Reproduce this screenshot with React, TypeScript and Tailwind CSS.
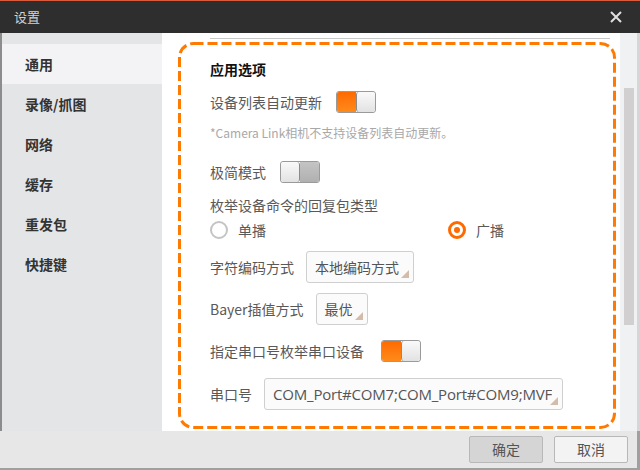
import React from 'react';

const FONT = { fontFamily: '"Noto Sans CJK SC", "Noto Sans", sans-serif' };

function Toggle({ on }: { on: boolean }) {
  return (
    <div className="flex h-[22px] w-[40px] rounded-[3px] overflow-hidden border border-[#9a9a9a] shrink-0">
      {on ? (
        <>
          <div className="flex-1 bg-gradient-to-b from-[#ff6a00] to-[#ff8a1a]" />
          <div className="w-[19px] rounded-[3px] border-l border-[#8a8a8a] bg-gradient-to-b from-[#fafafa] to-[#e2e2e2]" />
        </>
      ) : (
        <>
          <div className="w-[19px] rounded-[3px] border-r border-[#8a8a8a] bg-gradient-to-b from-[#fafafa] to-[#e2e2e2]" />
          <div className="flex-1 bg-gradient-to-b from-[#c4c4c4] to-[#b0b0b0]" />
        </>
      )}
    </div>
  );
}

function Select({ label, w }: { label: string; w: string }) {
  return (
    <div className={`relative flex h-[32px] items-center rounded-[3px] border border-[#cfcfcf] bg-[#fbfbfb] pl-[8px] text-[14px] text-[#555] ${w}`}>
      {label}
      <svg className="absolute bottom-[4px] right-[4px]" width="8" height="8" viewBox="0 0 8 8">
        <path d="M8 0 L8 8 L0 8 Z" fill="#d4bcaa" />
      </svg>
    </div>
  );
}

const sideItems = ['通用', '录像/抓图', '网络', '缓存', '重发包', '快捷键'];

export default function App() {
  return (
    <div className="flex h-[470px] w-[640px] flex-col overflow-hidden bg-white" style={FONT}>
      {/* title bar */}
      <div className="flex h-[33px] shrink-0 flex-col bg-[#2e2e2e]">
        <div className="h-px bg-[#d95a3c]" />
        <div className="flex flex-1 items-center justify-between pl-[14px] pr-[18px]">
          <span className="text-[13px] text-[#d2d2d2]">设置</span>
          <svg width="12" height="12" viewBox="0 0 12 12">
            <path d="M1 1 L11 11 M11 1 L1 11" stroke="#e0e0e0" strokeWidth="2" />
          </svg>
        </div>
      </div>

      <div className="flex min-h-0 flex-1">
        {/* sidebar */}
        <div className="flex w-[162px] shrink-0 flex-col border-l-2 border-[#8c8c8c] bg-[#e4e5e7] pt-[11px]">
          {sideItems.map((s, i) => (
            <div
              key={s}
              className={`flex h-[40px] items-center pl-[23px] text-[14px] font-bold text-[#333] ${i === 0 ? 'bg-[#f3f3f5]' : ''}`}
            >
              {s}
            </div>
          ))}
        </div>

        {/* content */}
        <div className="relative flex flex-1 flex-col pl-[48px] text-[14px] text-[#595959]">
          <div className="mt-[5px] h-px w-[400px] bg-[#c8c8c8]" />
          <div className="mt-[18px] flex h-[24px] items-center font-bold text-[#111]">应用选项</div>
          <div className="mt-[9px] flex h-[24px] items-center gap-[14px]">
            <span>设备列表自动更新</span>
            <Toggle on />
          </div>
          <div className="mt-[10px] flex h-[18px] items-center text-[12px] text-[#a8a8a8]">
            *Camera Link相机不支持设备列表自动更新。
          </div>
          <div className="mt-[18px] flex h-[24px] items-center gap-[14px]">
            <span>极简模式</span>
            <Toggle on={false} />
          </div>
          <div className="mt-[11px] flex h-[20px] items-center">枚举设备命令的回复包类型</div>
          <div className="mt-[5px] flex h-[20px] items-center">
            <div className="flex w-[238px] items-center gap-[10px]">
              <div className="h-[18px] w-[18px] rounded-full border-2 border-[#c4c4c4]" />
              <span>单播</span>
            </div>
            <div className="flex items-center gap-[10px]">
              <div className="flex h-[18px] w-[18px] items-center justify-center rounded-full border-[3px] border-[#ff6a00]">
                <div className="h-[6px] w-[6px] rounded-full bg-[#ff6a00]" />
              </div>
              <span>广播</span>
            </div>
          </div>
          <div className="mt-[11px] flex h-[32px] items-center gap-[12px]">
            <span>字符编码方式</span>
            <Select label="本地编码方式" w="w-[108px]" />
          </div>
          <div className="mt-[10px] flex h-[32px] items-center gap-[12px]">
            <span>Bayer插值方式</span>
            <Select label="最优" w="w-[52px]" />
          </div>
          <div className="mt-[14px] flex h-[24px] items-center gap-[17px]">
            <span>指定串口号枚举串口设备</span>
            <Toggle on />
          </div>
          <div className="mt-[15px] flex h-[32px] items-center gap-[12px]">
            <span>串口号</span>
            <div className="relative flex h-[32px] w-[299px] items-center overflow-hidden whitespace-nowrap rounded-[3px] border border-[#cfcfcf] bg-[#fbfbfb] pl-[8px] pr-[8px]">
              <span className="overflow-hidden text-[15px] tracking-[-0.2px] text-[#555]" style={{ fontFamily: '"Open Sans", "Noto Sans", sans-serif' }}>
                COM_Port#COM7;COM_Port#COM9;MVF
              </span>
              <svg className="absolute bottom-[4px] right-[4px]" width="8" height="8" viewBox="0 0 8 8">
                <path d="M8 0 L8 8 L0 8 Z" fill="#d4bcaa" />
              </svg>
            </div>
          </div>

          {/* dashed annotation */}
          <svg className="pointer-events-none absolute left-0 top-0" width="460" height="400">
            <rect x="17.5" y="10.5" width="435" height="384" rx="14" ry="14" fill="none" stroke="#ff7a00" strokeWidth="3" strokeDasharray="10 4" />
          </svg>
        </div>

        {/* scrollbar */}
        <div className="flex w-[20px] shrink-0 border-r-[3px] border-[#d6d6d6] bg-[#f0f1f3] pl-[4px] pt-[55px]">
          <div className="h-[237px] w-[10px] bg-[#d1cfd0]" />
        </div>
      </div>

      {/* footer */}
      <div className="flex h-[39px] shrink-0 items-start justify-end gap-[11px] border-b-2 border-r-[3px] border-[#a0a0a0] bg-[#e7e7e7] pr-[9px] pt-[5px]">
        <button className="flex h-[27px] w-[74px] items-center justify-center rounded-[2px] border border-[#b8b8b8] bg-[#d5d5d5] text-[14px] text-[#555]">
          确定
        </button>
        <button className="flex h-[27px] w-[74px] items-center justify-center rounded-[2px] border border-[#b8b8b8] bg-[#f3f3f3] text-[14px] text-[#555]">
          取消
        </button>
      </div>
    </div>
  );
}
